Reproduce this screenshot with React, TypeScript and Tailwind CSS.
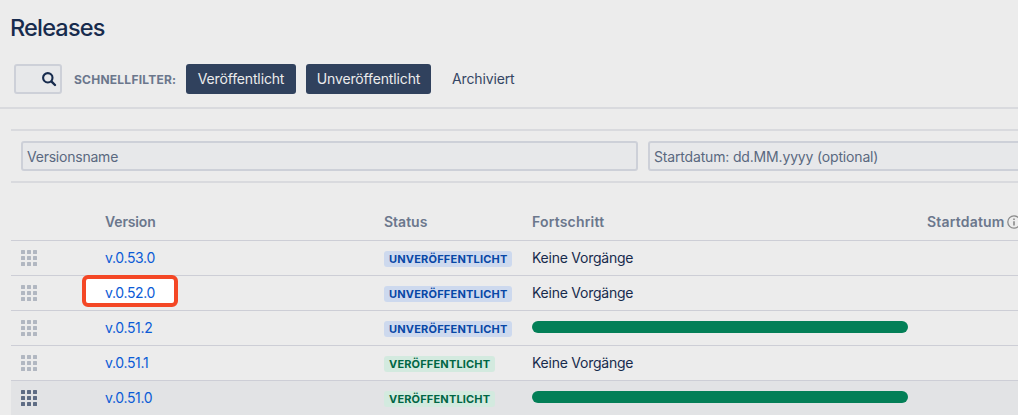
type Status = 'UNVERÖFFENTLICHT' | 'VERÖFFENTLICHT';

interface Release {
  version: string;
  status: Status;
  done: boolean;
  marked?: boolean;
  hovered?: boolean;
}

const releases: Release[] = [
  { version: 'v.0.53.0', status: 'UNVERÖFFENTLICHT', done: false },
  { version: 'v.0.52.0', status: 'UNVERÖFFENTLICHT', done: false, marked: true },
  { version: 'v.0.51.2', status: 'UNVERÖFFENTLICHT', done: true },
  { version: 'v.0.51.1', status: 'VERÖFFENTLICHT', done: false },
  { version: 'v.0.51.0', status: 'VERÖFFENTLICHT', done: true, hovered: true },
];

function SearchIcon() {
  return (
    <svg width="16" height="16" viewBox="0 0 16 16" fill="none" stroke="#172b4d" strokeWidth="2.1" strokeLinecap="round">
      <circle cx="6.8" cy="6.8" r="4.7" />
      <path d="M10.6 10.6 14 14" strokeWidth="2.4" />
    </svg>
  );
}

function InfoIcon() {
  return (
    <svg className="shrink-0" width="14" height="14" viewBox="0 0 14 14" fill="none" stroke="#8a8a8a" strokeWidth="1.3">
      <circle cx="7" cy="7" r="6.2" />
      <path d="M7 6.2V10.4" strokeWidth="1.6" />
      <path d="M7 3.4V4.9" strokeWidth="1.6" />
    </svg>
  );
}

function DragHandle({ dark }: { dark?: boolean }) {
  return (
    <div className="grid w-4 grid-cols-3 gap-[2px]">
      {Array.from({ length: 9 }, (_, i) => (
        <span key={i} className={dark ? 'size-1 rounded-[0.5px] bg-[#5e6c84]' : 'size-1 rounded-[0.5px] bg-[#b1b7c1]'} />
      ))}
    </div>
  );
}

function StatusBadge({ status }: { status: Status }) {
  const open = status === 'UNVERÖFFENTLICHT';
  return (
    <span
      className={
        open
          ? 'mt-[2px] flex h-4 w-32 items-center rounded-[3px] bg-[#cdd9ee] pl-[5px] text-[11px] font-bold tracking-[0.018em] text-[#0747a6]'
          : 'mt-[2px] flex h-4 w-[111px] items-center rounded-[3px] bg-[#d3eadf] pl-[5px] text-[11px] font-bold tracking-[0.015em] text-[#006644]'
      }
    >
      {status}
    </span>
  );
}

function ReleaseRow({ release }: { release: Release }) {
  return (
    <div
      className={
        release.hovered
          ? 'flex h-[35px] items-center border-t border-[#cdced6] bg-[#e2e3e5] pl-[10px]'
          : 'flex h-[35px] items-center border-t border-[#cdced6] pl-[10px]'
      }
    >
      <div className="w-[84px] shrink-0">
        <DragHandle dark={release.hovered} />
      </div>
      <div className="relative w-[279px] shrink-0 text-[#0b5bd6]">
        {release.marked && (
          <span className="absolute -top-2 -left-[23px] h-8 w-24 rounded-[6px] border-4 border-[#f44725] bg-white" />
        )}
        <span className="relative tracking-[-0.024em]">{release.version}</span>
      </div>
      <div className="w-[148px] shrink-0">
        <StatusBadge status={release.status} />
      </div>
      {release.done ? (
        <div className="-mt-[2px] h-3 w-[376px] shrink-0 rounded-full bg-[#037f57]" />
      ) : (
        <span className="tracking-[-0.017em]">Keine Vorgänge</span>
      )}
    </div>
  );
}

export default function App() {
  return (
    <div className="flex h-[415px] w-[1018px] flex-col overflow-hidden bg-[#ececec] font-['Inter',sans-serif] text-[14px] leading-5 whitespace-nowrap text-[#172b4d]">
      <header className="flex h-[109px] shrink-0 flex-col border-b-2 border-[#d9dade]">
        <h1 className="mt-[14px] pl-[10px] text-[23.5px] leading-7 font-medium tracking-[-0.035em]">Releases</h1>
        <div className="mt-[22px] flex h-[30px] items-center pl-[14px]">
          <div className="flex h-[30px] w-12 items-center justify-end rounded-[3px] border-2 border-[#cdd0d8] bg-[#e7e8ea] pr-[3px]">
            <SearchIcon />
          </div>
          <span className="mt-px ml-3 w-28 text-[12px] font-bold tracking-[0.02em] text-[#6b778c]">SCHNELLFILTER:</span>
          <button className="h-[30px] w-[110px] rounded-[3px] bg-[#30415d] tracking-[-0.01em] text-[#ececec]">Veröffentlicht</button>
          <button className="ml-[10px] h-[30px] w-[125px] rounded-[3px] bg-[#30415d] tracking-[-0.01em] text-[#ececec]">Unveröffentlicht</button>
          <button className="ml-[21px] tracking-[-0.01em] text-[#344563]">Archiviert</button>
        </div>
      </header>

      <form className="mt-5 ml-[11px] flex h-[54px] shrink-0 items-center gap-[10px] border-y-2 border-[#d9dade] pl-[10px] text-[#5a6880]">
        <div className="flex h-[30px] w-[617px] shrink-0 items-center rounded-[3px] border-2 border-[#cdd0d8] bg-[#e7e8ea] pt-[2px] pl-1 tracking-[-0.016em]">
          Versionsname
        </div>
        <div className="flex h-[30px] w-[420px] shrink-0 items-center rounded-[3px] border-2 border-[#cdd0d8] bg-[#e7e8ea] pt-[2px] pl-1 tracking-[-0.012em]">
          Startdatum: dd.MM.yyyy (optional)
        </div>
      </form>

      <section className="ml-[11px] flex shrink-0 flex-col">
        <div className="flex h-[57px] items-center pt-[21px] pl-[94px] font-semibold text-[#6b778c]">
          <span className="w-[279px] shrink-0 tracking-[-0.01em]">Version</span>
          <span className="w-[148px] shrink-0">Status</span>
          <span className="w-[395px] shrink-0 tracking-[0.014em]">Fortschritt</span>
          <span className="w-[80px] shrink-0 tracking-[0.014em]">Startdatum</span>
          <InfoIcon />
        </div>
        {releases.map((release) => (
          <ReleaseRow key={release.version} release={release} />
        ))}
      </section>
    </div>
  );
}
